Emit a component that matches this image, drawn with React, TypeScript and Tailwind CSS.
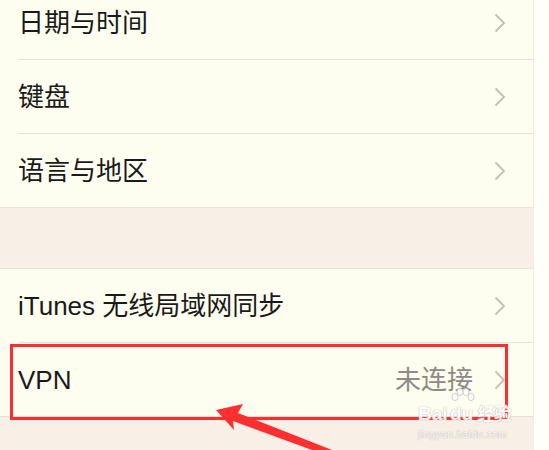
import React from "react";

const font = { fontFamily: '"Liberation Sans", "Noto Sans CJK SC", sans-serif' };

function Chevron() {
  return (
    <svg width="12" height="20" viewBox="0 0 12 20" className="shrink-0">
      <path d="M1.5 1.5 L10 10 L1.5 18.5" fill="none" stroke="#c4beb7" strokeWidth="1.8" />
    </svg>
  );
}

function Row({ label, value, sep = true }: { label: string; value?: string; sep?: boolean }) {
  return (
    <div className="bg-[#fdfdf0]">
      <div className="h-[73px] flex items-center pl-[18px] pr-[27px]">
        <span className="text-[26px] text-[#1a1a1a] flex-1 leading-none">{label}</span>
        {value && <span className="text-[26px] text-[#8f8a84] mr-[21px] leading-none">{value}</span>}
        <Chevron />
      </div>
      {sep && <div className="ml-[18px] h-px bg-[#e9e1d7]" />}
    </div>
  );
}

export default function App() {
  return (
    <div className="w-[549px] h-[450px] overflow-hidden flex relative" style={font}>
      <div className="w-[533px] flex flex-col">
        <div className="-mt-[14px]">
          <Row label="日期与时间" />
          <Row label="键盘" />
          <Row label="语言与地区" sep={false} />
          <div className="h-px bg-[#ebe2d8]" />
          <div className="h-[60px] bg-[#f8efe6]" />
          <div className="h-px bg-[#ebe2d8]" />
          <Row label="iTunes 无线局域网同步" />
          <Row label="VPN" value="未连接" sep={false} />
          <div className="h-px bg-[#e6ddd3]" />
          <div className="h-[60px] bg-[#f8efe6]" />
        </div>
      </div>
      <div className="flex-1 bg-[#fffffa] border-l border-[#f2ebe2]" />

      {/* red highlight box */}
      <div className="absolute left-[10px] top-[344px] w-[498px] h-[76px] border-[3px] border-[#ff2d2d]" />

      {/* arrow */}
      <svg className="absolute left-0 top-0" width="549" height="450" viewBox="0 0 549 450">
        <polygon
          points="216,410 243,404 238,413 332,450 312,450 233,421 234,430"
          fill="#ff2f2f"
        />
      </svg>

      {/* Baidu watermark */}
      <div className="absolute left-[418px] top-[388px] flex flex-col items-start opacity-90">
        <div className="flex items-end leading-none">
          <span className="text-[19px] font-bold text-white [text-shadow:0_0_1px_#b5b0aa,0_0_1px_#b5b0aa]">Bai</span>
          <span className="relative flex flex-col items-center">
            <svg width="28" height="22" viewBox="0 0 28 22" className="-mb-[2px]">
              <g fill="white" stroke="#c2bcb5" strokeWidth="0.8">
                <ellipse cx="7" cy="9" rx="3" ry="3.6" />
                <ellipse cx="12" cy="4" rx="3" ry="3.6" />
                <ellipse cx="18" cy="4" rx="3" ry="3.6" />
                <ellipse cx="23" cy="9" rx="3" ry="3.6" />
              </g>
            </svg>
            <span className="text-[19px] font-bold text-white [text-shadow:0_0_1px_#b5b0aa,0_0_1px_#b5b0aa] -mt-[4px]">du</span>
          </span>
          <span className="text-[17px] font-bold text-white [text-shadow:0_0_1px_#b5b0aa,0_0_1px_#b5b0aa] ml-[2px]">经验</span>
        </div>
        <span className="text-[10px] text-white [text-shadow:0_0_1px_#b5b0aa,0_0_1px_#b5b0aa] mt-[4px] tracking-[0.5px]">jingyan.baidu.com</span>
      </div>
    </div>
  );
}
